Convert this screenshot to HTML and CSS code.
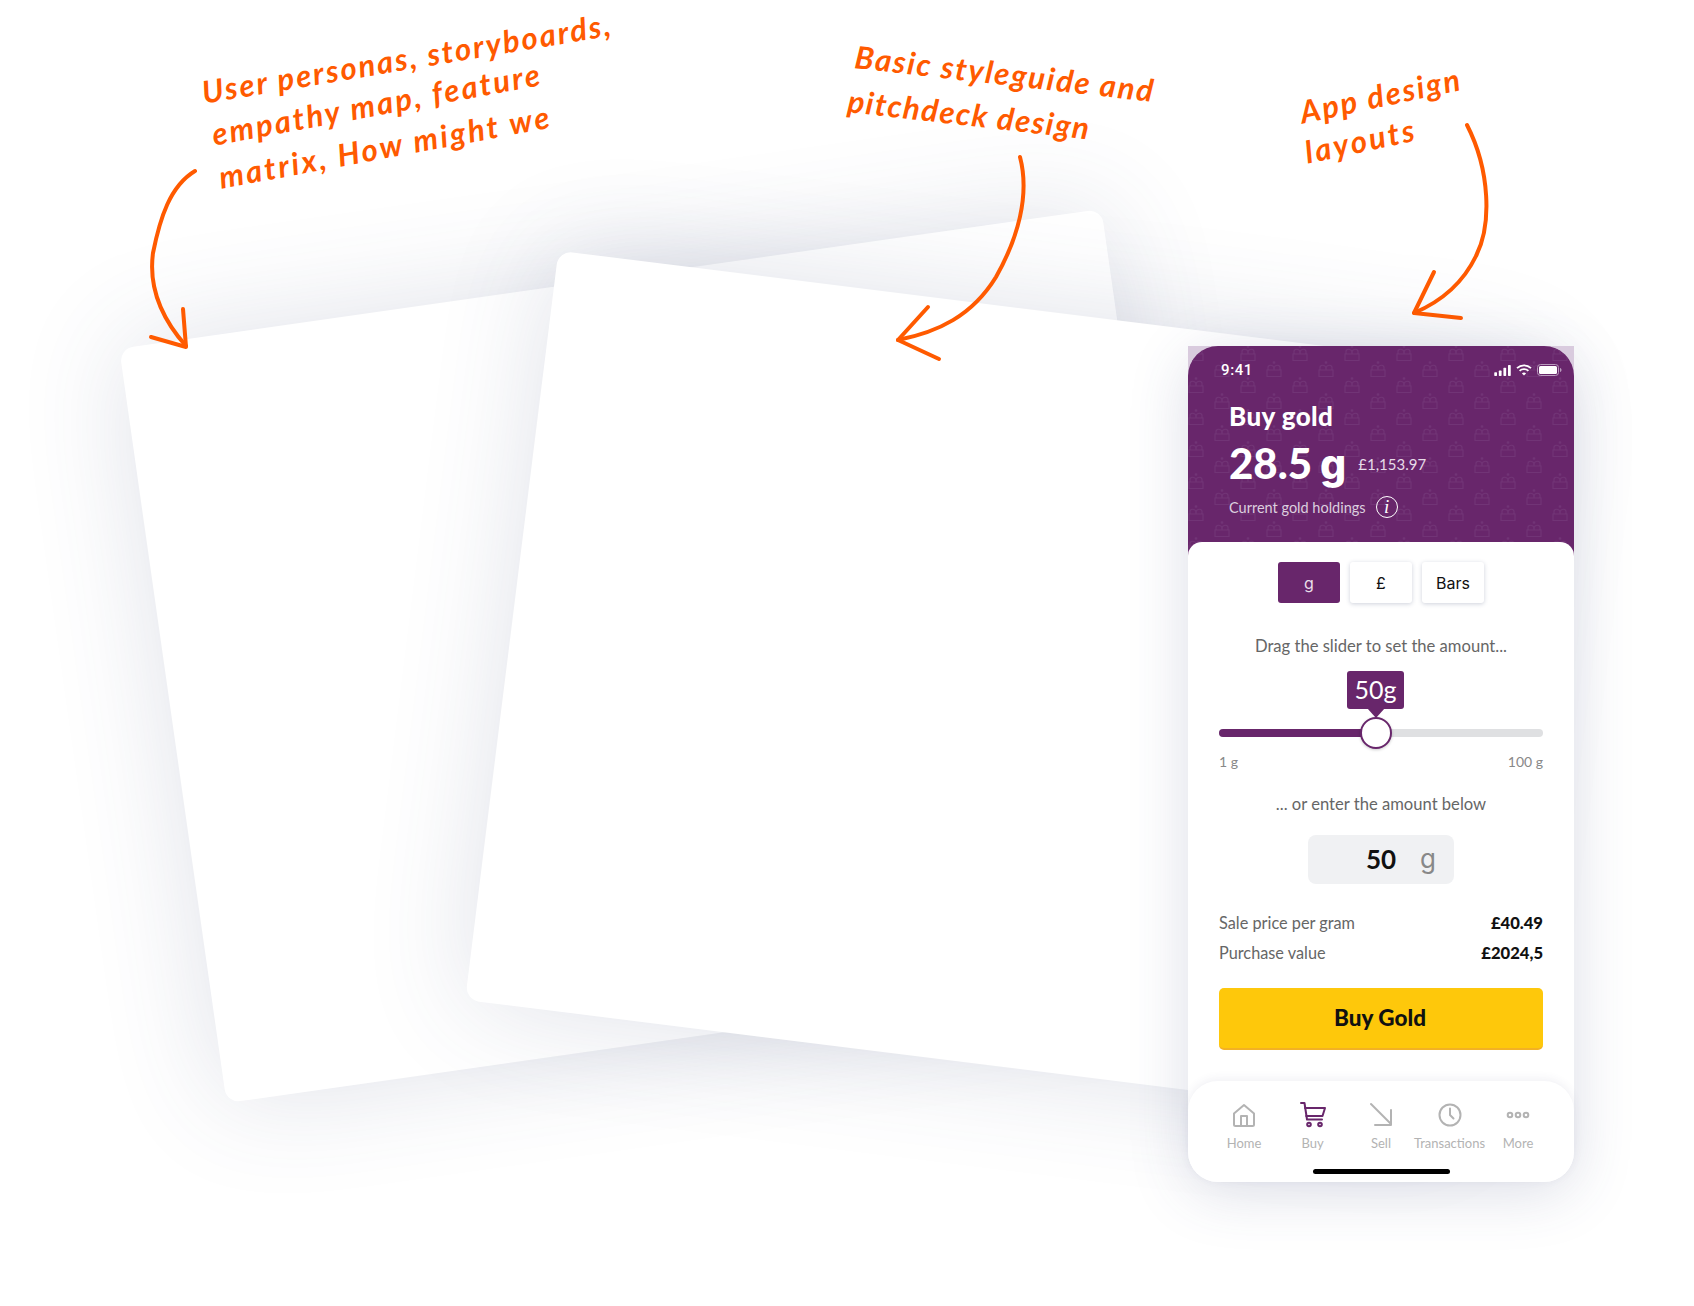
FILE: index.html
```html
<!DOCTYPE html>
<html lang="en">
<head>
    <meta charset="UTF-8">
    <meta name="viewport" content="width=device-width, initial-scale=1.0">
    <title>Gold app design process</title>
    <link rel="stylesheet" href="styles.css">
</head>
<body>
    <div class="canvas">
        <div class="sheet sheet-back"></div>
        <div class="sheet sheet-front"></div>

        <p class="note-line note-a1">User personas, storyboards,</p>
        <p class="note-line note-a2">empathy map, feature</p>
        <p class="note-line note-a3">matrix, How might we</p>
        <p class="note-line note-b1">Basic styleguide and</p>
        <p class="note-line note-b2">pitchdeck design</p>
        <p class="note-line note-c1">App design</p>
        <p class="note-line note-c2">layouts</p>

        <svg class="arrows" viewBox="0 0 1694 1306" fill="none" stroke="#ff5a00" stroke-width="4" stroke-linecap="round" stroke-linejoin="round">
            <path d="M195 171C170 186 160 218 153 253C148 290 163 320 186 346"/>
            <path d="M183 309L186 347L151 337"/>
            <path d="M1020 157C1030 195 1018 238 996 277C972 316 938 332 898 340"/>
            <path d="M928 307L898 340L939 359"/>
            <path d="M1467 125C1490 170 1492 225 1476 256C1462 285 1440 302 1414 313"/>
            <path d="M1434 272L1414 313L1461 318"/>
        </svg>

        <div class="phone">
            <header class="phone-head">
                <svg class="crowns" width="386" height="210">
                    <defs>
                        <g id="crown" fill="none" stroke="#713476" stroke-width="1.1">
                            <path d="M1 9H15V15.500H1Z"/>
                            <path d="M2 9V6.500C2 3.500 7 3.500 8 6.500C9 3.500 14 3.500 14 6.500V9"/>
                            <path d="M8 6.500V9"/>
                            <circle cx="8" cy="1.500" r="1.200" fill="#713476" stroke="none"/>
                        </g>
                        <pattern id="crownTile" width="52" height="32" patternUnits="userSpaceOnUse" patternTransform="translate(0 -1)">
                            <use href="#crown" x="0" y="0"/>
                            <use href="#crown" x="26" y="16"/>
                        </pattern>
                    </defs>
                    <rect width="386" height="210" fill="url(#crownTile)"/>
                </svg>
                <div class="status-bar">
                    <span class="status-time">9:41</span>
                    <span class="status-icons">
                        <svg width="17" height="11" viewBox="0 0 18 12" fill="#fff">
                            <rect x="0" y="8" width="3" height="4" rx=".7"/>
                            <rect x="5" y="6" width="3" height="6" rx=".7"/>
                            <rect x="10" y="3" width="3" height="9" rx=".7"/>
                            <rect x="15" y="0" width="3" height="12" rx=".7"/>
                        </svg>
                        <svg width="16" height="12" viewBox="0 0 16 12" fill="none" stroke="#fff" stroke-width="1.8">
                            <path d="M1 4.200C5 .4 11 .4 15 4.200"/>
                            <path d="M3.600 6.800C6 4.500 10 4.500 12.400 6.800"/>
                            <path d="M8 11.600L5.900 9.400C7 8.300 9 8.300 10.100 9.400Z" fill="#fff" stroke="none"/>
                        </svg>
                        <svg width="25" height="12" viewBox="0 0 25 12" fill="none">
                            <rect x=".5" y=".5" width="21" height="11" rx="3" stroke="#b99bbd"/>
                            <rect x="2" y="2" width="18" height="8" rx="1.500" fill="#fff"/>
                            <path d="M23 4V8C24 7.700 24.500 6.900 24.500 6S24 4.300 23 4Z" fill="#b99bbd"/>
                        </svg>
                    </span>
                </div>
                <h1 class="head-title">Buy gold</h1>
                <div class="holdings">
                    <span class="holdings-grams">28.5 <span class="grams-unit">g</span></span>
                    <span class="holdings-value">£1,153.97</span>
                </div>
                <div class="holdings-label">
                    Current gold holdings
                    <span class="info-mark">i</span>
                </div>
            </header>

            <main class="phone-body">
                <div class="unit-tabs">
                    <button class="unit-tab unit-tab-on">g</button>
                    <button class="unit-tab">£</button>
                    <button class="unit-tab">Bars</button>
                </div>
                <p class="hint hint-drag">Drag the slider to set the amount...</p>
                <div class="slider">
                    <span class="slider-tip">50g</span>
                    <div class="slider-track">
                        <div class="slider-fill"></div>
                    </div>
                    <span class="slider-knob"></span>
                </div>
                <div class="slider-range">
                    <span>1 g</span>
                    <span>100 g</span>
                </div>
                <p class="hint hint-enter">... or enter the amount below</p>
                <div class="amount-box">
                    <span class="amount-num">50</span>
                    <span class="amount-unit">g</span>
                </div>
                <div class="price-row"><span>Sale price per gram</span><b>£40.49</b></div>
                <div class="price-row"><span>Purchase value</span><b>£2024,5</b></div>
                <button class="buy-btn">Buy Gold</button>
            </main>

            <nav class="tabbar">
                <div class="tabbar-items">
                    <a class="tab-item">
                        <svg width="26" height="26" viewBox="0 0 26 26" fill="none" stroke="#b3b3b3" stroke-width="2" stroke-linejoin="round">
                            <path d="M3 11.500L13 3L23 11.500V22.500C23 23.500 22.500 24 21.500 24H4.500C3.500 24 3 23.500 3 22.500Z"/>
                            <path d="M10 24V14H16V24"/>
                        </svg>
                        Home
                    </a>
                    <a class="tab-item">
                        <svg width="26" height="26" viewBox="0 0 26 26" fill="none" stroke="#68266b" stroke-width="2" stroke-linejoin="round" stroke-linecap="round">
                            <path d="M1 1H4.500L7 17.500H22"/>
                            <path d="M5 6H25L22.500 14H6.200"/>
                            <circle cx="9" cy="22.500" r="1.800"/>
                            <circle cx="20" cy="22.500" r="1.800"/>
                        </svg>
                        Buy
                    </a>
                    <a class="tab-item">
                        <svg width="26" height="26" viewBox="0 0 26 26" fill="none" stroke="#b3b3b3" stroke-width="2" stroke-linecap="round" stroke-linejoin="round">
                            <path d="M3 2L23 22"/>
                            <path d="M23 8V23H7"/>
                        </svg>
                        Sell
                    </a>
                    <a class="tab-item">
                        <svg width="26" height="26" viewBox="0 0 26 26" fill="none" stroke="#b3b3b3" stroke-width="2" stroke-linecap="round" stroke-linejoin="round">
                            <circle cx="13" cy="13" r="10.500"/>
                            <path d="M13 6.500V13L16.500 16.500"/>
                        </svg>
                        Transactions
                    </a>
                    <a class="tab-item">
                        <svg width="26" height="26" viewBox="0 0 26 26" fill="none" stroke="#b3b3b3" stroke-width="2">
                            <circle cx="5" cy="13" r="2.300"/>
                            <circle cx="13" cy="13" r="2.300"/>
                            <circle cx="21" cy="13" r="2.300"/>
                        </svg>
                        More
                    </a>
                </div>
                <div class="home-bar"></div>
            </nav>
        </div>
    </div>
</body>
</html>
```

FILE: styles.css
```css
body {
    margin: 0;
    background-color: #fff;
    font-family: Lato, "Liberation Sans", sans-serif;
}
.canvas {
    position: relative;
    width: 1694px;
    height: 1306px;
    overflow: hidden;
    background-color: #fff;
}

/* tilted blank sheets */
.sheet {
    position: absolute;
    background-color: #fff;
    border-radius: 14px;
    box-shadow: 0 0 110px rgba(62, 72, 120, 0.16);
}
.sheet-back {
    left: 168px;
    top: 275px;
    width: 992px;
    height: 762px;
    transform: rotate(-8.1deg);
}
.sheet-front {
    left: 508px;
    top: 309px;
    width: 990px;
    height: 755px;
    transform: rotate(7.1deg);
}

/* handwritten notes */
.note-line {
    position: absolute;
    margin: 0;
    color: #ff5a00;
    font-size: 31px;
    font-style: italic;
    font-weight: 700;
    line-height: 36px;
    white-space: nowrap;
    transform-origin: left center;
}
.note-a1 { left: 202px; top: 74px; letter-spacing: 2.1px; transform: rotate(-9.5deg); }
.note-a2 { left: 212px; top: 116px; letter-spacing: 2.35px; transform: rotate(-10.5deg); }
.note-a3 { left: 219px; top: 159px; letter-spacing: 2.55px; transform: rotate(-10.5deg); }
.note-b1 { left: 855px; top: 38px; letter-spacing: 1.8px; transform: rotate(6.5deg); }
.note-b2 { left: 848px; top: 82px; letter-spacing: 1.6px; transform: rotate(6.5deg); }
.note-c1 { left: 1300px; top: 94px; letter-spacing: 2px; transform: rotate(-12deg); }
.note-c2 { left: 1305px; top: 134px; letter-spacing: 2.6px; transform: rotate(-12deg); }
.arrows {
    position: absolute;
    left: 0;
    top: 0;
    width: 1694px;
    height: 1306px;
}

/* phone */
.phone {
    position: absolute;
    left: 1188px;
    top: 346px;
    width: 386px;
    height: 836px;
    display: flex;
    flex-direction: column;
    background-color: #fff;
    border-radius: 30px;
    box-shadow: 0 10px 60px rgba(62, 72, 120, 0.18);
}
.phone::before {
    content: "";
    position: absolute;
    left: 0;
    top: 0;
    width: 386px;
    height: 40px;
    background-color: #d9cbde;
}
.phone-head {
    position: relative;
    height: 210px;
    margin-bottom: -14px;
    padding: 0 41px;
    box-sizing: border-box;
    color: #fff;
    background-color: #68266b;
    border-radius: 30px 30px 0 0;
    overflow: hidden;
}
.crowns {
    position: absolute;
    left: 0;
    top: 0;
}
.status-bar {
    position: relative;
    display: flex;
    justify-content: space-between;
    align-items: center;
    height: 16px;
    margin: 16px -29px 0 -8px;
}
.status-time {
    font-family: Roboto, sans-serif;
    font-size: 15px;
    font-weight: 500;
    letter-spacing: 0.6px;
}
.status-icons {
    display: flex;
    align-items: center;
    gap: 5px;
}
.head-title {
    position: relative;
    margin: 22px 0 0;
    font-size: 26px;
    font-weight: 900;
    letter-spacing: 0.4px;
    line-height: 32px;
}
.holdings {
    position: relative;
    display: flex;
    align-items: flex-start;
    gap: 12px;
    margin-top: 5px;
    height: 52px;
}
.holdings-grams {
    font-size: 42px;
    font-weight: 900;
    line-height: 52px;
    word-spacing: -2px;
}
.grams-unit {
    font-family: Inter, sans-serif;
    font-weight: 800;
    font-size: 41px;
}
.holdings-value {
    margin-top: 18px;
    font-size: 15px;
    line-height: 18px;
    color: #e6dbe8;
}
.holdings-label {
    position: relative;
    display: flex;
    align-items: center;
    gap: 10px;
    margin-top: 7px;
    font-size: 14.5px;
    color: #dccfdf;
}
.info-mark {
    width: 20px;
    height: 20px;
    border: 1.5px solid #fff;
    border-radius: 50%;
    color: #fff;
    font-family: "Liberation Serif", serif;
    font-size: 19px;
    font-style: italic;
    line-height: 20px;
    text-align: center;
}

.phone-body {
    position: relative;
    flex: 1;
    padding: 20px 31px 0;
    background-color: #fff;
    border-radius: 14px 14px 0 0;
}
.unit-tabs {
    display: flex;
    justify-content: center;
    gap: 10px;
}
.unit-tab {
    width: 62px;
    height: 41px;
    padding: 0;
    border: none;
    border-radius: 3px;
    background-color: #fff;
    color: #111;
    font-family: Inter, sans-serif;
    font-size: 16px;
    box-shadow: 0 1px 4px rgba(60, 70, 110, 0.25);
}
.unit-tab-on {
    background-color: #68266b;
    color: #e9dfea;
    box-shadow: none;
}
.hint {
    margin: 0;
    color: #666;
    font-size: 16.6px;
    line-height: 20px;
    text-align: center;
}
.hint-drag {
    margin-top: 33px;
}
.slider {
    position: relative;
    height: 8px;
    margin-top: 73px;
}
.slider-track {
    height: 8px;
    background-color: #dfe0e2;
    border-radius: 4px;
}
.slider-fill {
    width: 158px;
    height: 8px;
    background-color: #68266b;
    border-radius: 4px 0 0 4px;
}
.slider-knob {
    position: absolute;
    left: 141px;
    top: -12px;
    width: 28px;
    height: 28px;
    background-color: #fff;
    border: 2px solid #68266b;
    border-radius: 50%;
    box-shadow: 0 1px 3px rgba(0, 0, 0, 0.2);
}
.slider-tip {
    position: absolute;
    left: 128px;
    top: -58px;
    width: 57px;
    height: 38px;
    background-color: #68266b;
    border-radius: 3px;
    color: #fff;
    font-size: 25px;
    line-height: 37px;
    text-align: center;
}
.slider-tip::after {
    content: "";
    position: absolute;
    left: 20px;
    bottom: -9px;
    border-left: 9px solid transparent;
    border-right: 9px solid transparent;
    border-top: 10px solid #68266b;
}
.slider-range {
    display: flex;
    justify-content: space-between;
    margin-top: 16px;
    color: #888;
    font-size: 14px;
    line-height: 18px;
}
.hint-enter {
    margin-top: 23px;
}
.amount-box {
    position: relative;
    width: 146px;
    height: 49px;
    margin: 21px auto 0;
    background-color: #f0f1f3;
    border-radius: 8px;
}
.amount-num {
    position: absolute;
    left: 58px;
    top: 8px;
    color: #111;
    font-size: 26px;
    font-weight: 700;
    line-height: 32px;
}
.amount-unit {
    position: absolute;
    left: 112px;
    top: 8px;
    color: #888;
    font-family: Inter, sans-serif;
    font-size: 26px;
    line-height: 32px;
}
.price-row {
    display: flex;
    justify-content: space-between;
    height: 30px;
    color: #666;
    font-size: 16.3px;
    line-height: 30px;
}
.price-row b {
    color: #111;
    font-size: 16.6px;
    font-weight: 900;
}
.amount-box + .price-row {
    margin-top: 24px;
}
.buy-btn {
    display: block;
    width: 324px;
    height: 62px;
    margin-top: 20px;
    padding: 0 2px 2px 0;
    border: none;
    border-bottom: 2px solid #f3b124;
    border-radius: 5px;
    background-color: #fec80b;
    color: #111;
    font-family: Lato, sans-serif;
    font-size: 22.5px;
    font-weight: 900;
}

.tabbar {
    position: relative;
    height: 101px;
    background-color: #fff;
    border-radius: 30px;
    box-shadow: 0 -2px 10px rgba(60, 70, 110, 0.08);
}
.tabbar-items {
    display: flex;
    justify-content: center;
    padding-top: 21px;
}
.tab-item {
    display: flex;
    flex-direction: column;
    align-items: center;
    gap: 7px;
    width: 68.5px;
    color: #b3b3b3;
    font-size: 13px;
    line-height: 16px;
    white-space: nowrap;
}
.home-bar {
    width: 137px;
    height: 5px;
    margin: 18px auto 0;
    background-color: #000;
    border-radius: 3px;
}
```
